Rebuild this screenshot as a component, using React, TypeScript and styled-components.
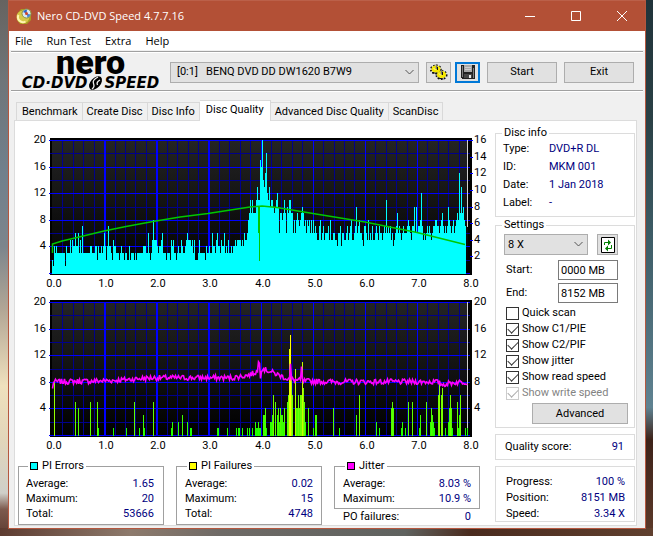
import React from "react";
import styled, { createGlobalStyle, css } from "styled-components";

const GlobalStyle = createGlobalStyle`
  * { box-sizing: border-box; }
  body { margin: 0; background: #5b5a58; color: #000; font: 11px/14px Roboto, "Liberation Sans", sans-serif; }
  button, input, select { font: inherit; color: inherit; margin: 0; }
`;

const Desktop = styled.div`
  min-height: 100vh;
  padding: 0 7px 7px 8px;
  background:
    linear-gradient(100deg, #5d3b30 0%, #8d7a6c 20%, #6e6a66 34%, #5f625f 62%, #4a2b1e 72%, #60402f 100%) bottom / 100% 8px no-repeat,
    linear-gradient(#666360 0%, #6f7579 15%, #71808c 32%, #7c858c 46%, #b3a796 58%, #efe0bd 72%, #e2d6ba 82%, #cfcfc9 92%, #7d5a4e 95%, #5d3b30 100%) left / 8px 100% no-repeat,
    linear-gradient(#20333a 0%, #2a4045 22%, #3d5c66 44%, #5f8291 76%, #3d2219 82%, #5d3a2a 100%) right / 7px 100% no-repeat;
`;

const Window = styled.main`
  border: 1px solid #b5573f;
  border-top: 0;
  background: #f0f0f0;
`;

const TitleBar = styled.header`
  height: 31px;
  display: flex;
  align-items: center;
  padding-left: 7px;
  background: #b35036;
  border-top: 1px solid #bb6049;
  color: #fff;
  font-family: "Open Sans", "Noto Sans", sans-serif;
`;

const Title = styled.h1`
  flex: 1;
  margin: 0 0 0 5px;
  font-size: 11px;
  font-weight: 400;
`;

const CaptionButton = styled.button`
  width: 46px;
  height: 30px;
  padding: 0;
  border: 0;
  background: none;
  display: grid;
  place-items: center;
`;

const MenuBar = styled.nav`
  height: 19px;
  display: flex;
  gap: 14px;
  padding-left: 6px;
  background: #fff;
  font-family: "Open Sans", "Noto Sans", sans-serif;
`;

const MenuItem = styled.button`
  border: 0;
  padding: 0;
  background: none;
  line-height: 18px;
`;

const Toolbar = styled.section`
  margin: 1px 2px 0;
  height: 40px;
  display: flex;
  align-items: center;
  padding: 2px 9px 0 7px;
  border-top: 1px solid #a0a0a0;
  border-bottom: 1px solid #a0a0a0;
  box-shadow: inset 0 1px #fff, 0 1px #fff;
`;

const Logo = styled.div`
  width: 145px;
  height: 36px;
  margin-right: 7px;
  display: flex;
  flex-direction: column;
  align-items: center;
`;

const LogoName = styled.span`
  font-size: 34px;
  line-height: 16px;
  font-weight: 900;
`;

const LogoProduct = styled.span`
  display: flex;
  align-items: center;
  font: italic bold 15px/14px "DejaVu Sans", sans-serif;
  margin-top: 6px;
`;

const SelectBox = styled.div<{ $grow?: boolean }>`
  position: relative;
  height: 21px;
  flex: ${(p) => (p.$grow ? "1" : "0 0 84px")};
  min-width: 0;
  select {
    appearance: none;
    width: 100%;
    height: 100%;
    padding: 0 22px 0 ${(p) => (p.$grow ? "6px" : "3px")};
    border: 1px solid #adadad;
    border-radius: 0;
    background: #e1e1e1;
    white-space: pre;
  }
  svg {
    position: absolute;
    right: 4px;
    top: 7px;
    pointer-events: none;
  }
`;

const Button = styled.button<{ $width: number; $focus?: boolean }>`
  width: ${(p) => p.$width}px;
  height: 21px;
  padding: 0;
  display: grid;
  place-items: center;
  border: ${(p) => (p.$focus ? "2px solid #0078d7" : "1px solid #adadad")};
  background: #e1e1e1;
`;

const Actions = styled.div`
  display: flex;
  margin-left: 7px;
  gap: 7px;
  & > :nth-child(2) { margin-left: -3px; }
`;

const Tabs = styled.div`
  display: flex;
  align-items: flex-end;
  height: 20px;
  margin: 9px 8px 0 5px;
  padding-left: 2px;
`;

const Tab = styled.button<{ $on?: boolean }>`
  height: 18px;
  padding: 0 4px;
  border: 1px solid #d9d9d9;
  border-bottom: 0;
  border-left-width: 0;
  background: #f0f0f0;
  white-space: nowrap;
  &:first-child { border-left-width: 1px; padding-left: 5px; }
  ${(p) => p.$on && css`
    height: 21px;
    margin-bottom: -1px;
    padding: 0 6px 2px;
    background: #fff;
    position: relative;
  `}
`;

const Panel = styled.section`
  display: grid;
  grid-template-columns: minmax(0, 1fr) 140px;
  margin: 0 8px 2px 5px;
  padding-right: 1px;
  border: 1px solid #dcdcdc;
  background: #fff;
`;

const Results = styled.div`
  padding-top: 8px;
`;

const Chart = styled.svg`
  display: block;
  width: 100%;
  height: auto;
  text { font: 11px Roboto, "Liberation Sans", sans-serif; }
`;

const Stats = styled.div`
  display: grid;
  grid-template-columns: repeat(3, 1fr);
  gap: 12px;
  margin-top: 6px;
  padding: 0 15px 0 3px;
`;

const Group = styled.fieldset<{ $dark?: boolean; $pad?: string }>`
  min-width: 0;
  margin: 0;
  padding: ${(p) => p.$pad ?? "0"};
  border: 1px solid ${(p) => (p.$dark ? "#a0a0a0" : "#dcdcdc")};
`;

const Legend = styled.legend<{ $inset?: boolean }>`
  margin-left: ${(p) => (p.$inset ? "2px" : "-1px")};
  padding: 0 2px;
  height: 14px;
  display: flex;
  align-items: center;
  gap: 4px;
`;

const Swatch = styled.i<{ $color: string }>`
  width: 8px;
  height: 8px;
  border: 1px solid #000;
  background: ${(p) => p.$color};
`;

const Row = styled.div<{ $h: number }>`
  display: flex;
  justify-content: space-between;
  line-height: ${(p) => p.$h}px;
`;

const InfoRow = styled.div`
  display: grid;
  grid-template-columns: 46px 1fr;
  line-height: 18px;
`;

const Value = styled.span`
  color: #000080;
`;

const PoRow = styled.div`
  display: flex;
  justify-content: space-between;
  padding: 0 9px;
  line-height: 16px;
`;

const Sidebar = styled.aside`
  padding-top: 5px;
  display: flex;
  flex-direction: column;
`;

const Settings = styled(Group)`
  margin-top: 1px;
  padding: 2px 6px 3px 7px;
`;

const SpeedRow = styled.div`
  display: flex;
  gap: 9px;
  margin: 0 0 5px 1px;
`;

const Fields = styled.div`
  display: grid;
  gap: 3px;
  margin: 0 10px 2px 3px;
`;

const Field = styled.label`
  display: grid;
  grid-template-columns: 1fr 60px;
  align-items: center;
  input {
    width: 60px;
    height: 20px;
    padding: 0 2px;
    border: 1px solid #7a7a7a;
  }
`;

const Check = styled.label`
  display: flex;
  align-items: center;
  gap: 3px;
  height: 16px;
  margin-left: 3px;
  white-space: nowrap;
  input {
    appearance: none;
    width: 13px;
    height: 13px;
    border: 1px solid #333;
    background: #fff;
    display: grid;
    place-items: center;
  }
  input:checked::after {
    content: "";
    width: 9px;
    height: 5px;
    margin-bottom: 3px;
    border: solid #333;
    border-width: 0 0 1px 1px;
    transform: rotate(-45deg);
  }
  input:disabled { border-color: #ccc; }
  input:disabled::after { border-color: #aaa; }
  &:has(input:disabled) { color: #838383; }
`;

const AdvancedRow = styled.div`
  display: flex;
  justify-content: flex-end;
  margin-top: 2px;
`;

const Box = styled.div`
  margin-top: 6px;
  padding: 5px 10px 5px 9px;
  border: 1px solid #dcdcdc;
`;

const ProgressBox = styled(Box)`
  padding: 7px 9px 0 10px;
  height: 56px;
`;

const Chevron = () => (
  <svg width="11" height="7" viewBox="0 0 11 7" fill="none" stroke="#555">
    <path d="M1.5 1 5.5 5 9.5 1" />
  </svg>
);

const DiscIcon = () => (
  <svg width="16" height="16" viewBox="0 0 16 16">
    <path d="M1 6 5 1h8l2 4v7l-4 4H4l-3-4Z" fill="#a89a22" />
    <circle cx="7" cy="9" r="6.5" fill="#d6c748" />
    <path d="M2.5 7a5 5 0 0 0 7 6.5" stroke="#fff6b0" strokeWidth="2" fill="none" />
    <circle cx="10.5" cy="5.5" r="4.5" fill="#dce7f2" stroke="#8a9440" />
    <path d="M10.5 5.5 7 4a4 4 0 0 1 4-2.5Z" fill="#3568c4" />
    <path d="m10.5 5.5 4 1a4 4 0 0 1-3 3Z" fill="#4a86d2" />
    <circle cx="10.5" cy="5.5" r="1.5" fill="#d0452c" />
  </svg>
);

const GearsIcon = () => (
  <svg width="18" height="18" viewBox="0 0 18 18">
    <g fill="none" stroke="#111" strokeWidth="2" strokeDasharray="1.5 1.5">
      <ellipse cx="6" cy="6.5" rx="5" ry="4" />
      <ellipse cx="11.5" cy="12" rx="5" ry="4" />
    </g>
    <g fill="#f5e800">
      <ellipse cx="6" cy="6" rx="4.5" ry="3.5" />
      <ellipse cx="11.5" cy="11.5" rx="4.5" ry="3.5" />
    </g>
    <path d="M6.5 1v5M11.5 6.5v5" stroke="#777" strokeWidth="1.5" />
    <path d="M2 9.5 7 10.500M7.500 15l6 1M7.5 4v3M12.5 9v3" stroke="#111" />
    <path d="m3.5 5 2 2M9 10.5l2 2" stroke="#fffbb0" />
  </svg>
);

const SaveIcon = () => (
  <svg width="14" height="14" viewBox="0 0 14 14" shapeRendering="crispEdges">
    <path d="M0 0h14v14H1l-1-1Z" fill="#222" />
    <path d="M1 1h1v11H1zM12 3h1v10h-1z" fill="#808080" />
    <path d="M3 0h8v7H3z" fill="#a9a9a9" />
    <path d="M4 2h6v1H4zM4 4h6v1H4z" fill="#cecece" />
    <path d="M3 9h8v4H3z" fill="#484848" />
    <path d="M8 10h2v3H8z" fill="#e8e8e8" />
  </svg>
);

const RefreshIcon = () => (
  <svg width="14" height="16" viewBox="0 0 14 16">
    <path d="M.5.5h13v15H.5z" fill="#fff" stroke="#000" />
    <path d="M3.5 8V5.5H7M10.5 8v3.5H7" fill="none" stroke="#008000" />
    <path d="m7 2.5 3 3-3 3ZM7 8.5l-3 3 3 3Z" fill="#008000" />
  </svg>
);

const LogoDisc = () => (
  <svg width="17" height="14" viewBox="0 0 17 14" overflow="visible">
    <ellipse cx="8.5" cy="7" rx="5" ry="8" transform="rotate(42 8.5 7)" />
    <path d="M11 1Q5 4 6.5 7.5T5 13M13 4Q9 6 10.5 9" stroke="#f0f0f0" strokeWidth="1.3" fill="none" />
  </svg>
);

/* Plot geometry shared by both charts. */
const LEFT = 37;
const TOP = 11;
const HEIGHT = 133;
const GB = 52.15;
const BASE = TOP + HEIGHT + 1;
const level = (v: number) => TOP + HEIGHT - (v * HEIGHT) / 20;

/* One base-36 digit per sampled column. */
const PI_ERRORS = [
  "21434333333331", "4333535446446353", "7333333344333442433434", "6424744325443332343323322423",
  "332323333334443363235855", "5434456333233325453323433", "5433456555453522235333332433",
  "43364435644354463435334344545555454655689",
  "b9b999bdbbhgkedficbdabba9abca69989b96a9bb99686898789a978687868", "6867",
  "6557856756", "6675855665", "5466746655", "6756785567", "a678665477", "6585657556", "7657665676",
  "b676756456", "7967656766", "67876577a6", "a6778c7565", "6767656778", "8776789767", "67a8767867", "898f9d9a87",
].join("");

const PI_FAILURES: [number, number][] = [
  [54, 8], [75, 5], [78, 4], [90, 5], [97, 5], [98, 1], [113, 1], [126, 1], [134, 5], [139, 1], [143, 3], [144, 1],
  [153, 5], [171, 1], [172, 2], [178, 2], [182, 3], [187, 2], [190, 1], [191, 1], [217, 1], [218, 1], [227, 1],
  [236, 1], [238, 1], [239, 1], [242, 1], [247, 1], [249, 1], [252, 1], [255, 2], [256, 1], [257, 1], [258, 2],
  [259, 1], [260, 1], [263, 3], [264, 3], [265, 4], [266, 1], [270, 2], [271, 2], [272, 3], [273, 6], [275, 5],
  [277, 3], [278, 4], [279, 2], [280, 4], [281, 3], [282, 3], [283, 2], [284, 4], [287, 5], [288, 6], [289, 13],
  [290, 15], [291, 9], [292, 6], [295, 10], [296, 4], [297, 4], [298, 6], [299, 4], [300, 6], [301, 6], [302, 11],
  [303, 7], [304, 5], [305, 2], [308, 4], [313, 1], [315, 3], [316, 3], [333, 4], [339, 1], [356, 3], [359, 6],
  [376, 2], [379, 1], [391, 4], [392, 5], [393, 4], [401, 1], [402, 2], [405, 1], [408, 5], [412, 5], [419, 1],
  [420, 3], [426, 5], [430, 2], [431, 4], [432, 3], [433, 2], [434, 1], [438, 6], [439, 8], [441, 6], [442, 7],
  [445, 1], [448, 2], [449, 4], [450, 6], [451, 4], [452, 1], [457, 5], [458, 1], [459, 3], [460, 6], [465, 1], [467, 1],
];

const JITTER_KEYS: [number, number][] = [
  [0, 8], [40, 8.1], [60, 8.2], [100, 8.6], [180, 8.6], [196, 9], [204, 9.5], [210, 10], [220, 9.4],
  [236, 8.4], [252, 8.1], [280, 8], [384, 8], [390, 7.6], [402, 7.9], [415, 8],
];

const jitterAt = (x: number) => {
  const i = JITTER_KEYS.findIndex(([k]) => k >= x);
  if (i <= 0) return JITTER_KEYS[0][1];
  const [x0, y0] = JITTER_KEYS[i - 1];
  const [x1, y1] = JITTER_KEYS[i];
  return y0 + ((y1 - y0) * (x - x0)) / (x1 - x0);
};

const JITTER_SPIKES: Record<number, number> = { 0: 7, 206: 11, 207: 10.8, 208: 8.5, 238: 10.7, 249: 10.3 };

const jitterPath = () => {
  let seed = 7;
  let d = "";
  for (let x = 0; x < 416; x++) {
    seed = (seed * 1103515245 + 12345) % 2147483648;
    const noise = (seed / 2147483648 - 0.5) * 0.8;
    const v = JITTER_SPIKES[x] ?? jitterAt(x) + noise;
    d += `${x ? "L" : "M"}${LEFT + x + 0.5} ${level(v).toFixed(1)}`;
  }
  return d;
};

function Grid({ id }: { id: string }) {
  const steps = Array.from({ length: 41 }, (_, i) => i);
  return (
    <g shapeRendering="crispEdges">
      <defs>
        <linearGradient id={id} x2="0" y2="1">
          <stop offset="0" stopColor="#242424" />
          <stop offset="1" stopColor="#000" />
        </linearGradient>
      </defs>
      <rect x={LEFT - 2} y={TOP - 2} width="422" height={HEIGHT + 4} fill="#000" />
      <rect x={LEFT} y={TOP} width="416" height={HEIGHT} fill={`url(#${id})`} />
      {steps.filter((i) => i % 5).map((i) => (
        <rect key={i} x={Math.round(LEFT + (i * GB) / 5)} y={TOP} width="1" height={HEIGHT} fill="#00008b" />
      ))}
      {[1, 3, 5, 7, 9].map((i) => (
        <rect key={i} x={LEFT - 2} y={Math.round(level(i * 2))} width="420" height="1" fill="#00008b" />
      ))}
      {[1, 2, 3, 4, 5, 6, 7].map((i) => (
        <rect key={i} x={Math.round(LEFT + i * GB)} y={TOP} width={i < 4 ? 2 : 1} height={HEIGHT} fill="#0000ff" />
      ))}
      {[0, 4, 8, 12, 16, 20].map((i) => (
        <rect key={i} x={LEFT - 3} y={Math.round(level(i))} width="421" height="1" fill="#0000ff" />
      ))}
    </g>
  );
}

function Axes({ right }: { right: [string, number][] }) {
  return (
    <g>
      {[4, 8, 12, 16, 20].map((v) => (
        <text key={v} x="31" y={Math.round(level(v)) + 3} textAnchor="end">{v}</text>
      ))}
      {right.map(([t, v]) => (
        <text key={t} x="459" y={Math.round(level(v)) + 3}>{t}</text>
      ))}
      {Array.from({ length: 9 }, (_, i) => (
        <text key={i} x={Math.round(LEFT + 2 + i * GB)} y="158" textAnchor="middle">{i}.0</text>
      ))}
    </g>
  );
}

function ErrorChart() {
  const bars = PI_ERRORS.slice(0, 416).split("").map((c, i) => {
    const y = Math.round(level(parseInt(c, 36)));
    return `M${LEFT + i} ${BASE}V${y}h1V${BASE}Z`;
  }).join("");
  return (
    <Chart viewBox="0 0 480 162" role="img" aria-label="PI Errors">
      <Grid id="errors" />
      <g shapeRendering="crispEdges">
        <path d={bars} fill="#00ffff" />
        <rect x="452" y={TOP} width="1" height="87" fill="#d0d0d0" />
        {[2, 4, 6, 8, 10, 12, 14, 16].map((v) => (
          <rect key={v} x="455" y={Math.round(level(v * 1.25))} width="3" height="1" fill="#0000ff" />
        ))}
      </g>
      <path
        d="M37.5 124V115L47 112 62 108.5 89 102 111 97.5 138 92.5 165 88 193 84.5 235 78 247 77 262 78.5 298 84.5 350 93 402 103.5 450 115.5"
        fill="none" stroke="#00c800" strokeWidth="1.5"
      />
      <path d="M243.5 78V104M244.5 78V132" stroke="#00c800" />
      <Axes right={[16, 14, 12, 10, 8, 6, 4, 2].map((v) => [String(v), v * 1.25])} />
    </Chart>
  );
}

function FailureChart() {
  return (
    <Chart viewBox="0 0 480 162" role="img" aria-label="PI Failures and jitter">
      <Grid id="failures" />
      <g shapeRendering="crispEdges">
        <rect x="452" y={TOP} width="1" height={HEIGHT} fill="#d0d0d0" />
        {PI_FAILURES.map(([x, v]) => (
          <rect
            key={x} x={x - 15} y={Math.round(level(v))} width="1"
            height={BASE - Math.round(level(v))} fill={`rgb(${Math.min(255, 10 + v * 17)},255,0)`}
          />
        ))}
      </g>
      <path d={jitterPath()} fill="none" stroke="#ff00ff" strokeWidth="1.6" />
      <Axes right={[20, 16, 12, 8, 4].map((v) => [String(v), v])} />
    </Chart>
  );
}

function StatGroup({ title, color, rows, pad }: { title: string; color: string; rows: [string, string][]; pad: string }) {
  return (
    <Group $dark $pad={pad}>
      <Legend $inset><Swatch $color={color} />{title}</Legend>
      {rows.map(([k, v]) => (
        <Row $h={15} key={k}><span>{k}</span><Value>{v}</Value></Row>
      ))}
    </Group>
  );
}

const TABS = ["Benchmark", "Create Disc", "Disc Info", "Disc Quality", "Advanced Disc Quality", "ScanDisc"];
const INFO = [["Type:", "DVD+R DL"], ["ID:", "MKM 001"], ["Date:", "1 Jan 2018"], ["Label:", "-"]];
const CHECKS: [string, boolean, boolean][] = [
  ["Quick scan", false, false], ["Show C1/PIE", true, false], ["Show C2/PIF", true, false],
  ["Show jitter", true, false], ["Show read speed", true, false], ["Show write speed", true, true],
];

export default function App() {
  return (
    <Desktop>
      <GlobalStyle />
      <Window>
        <TitleBar>
          <DiscIcon />
          <Title>Nero CD-DVD Speed 4.7.7.16</Title>
          <CaptionButton aria-label="Minimize">
            <svg width="10" height="10"><path d="M0 5.5h10" stroke="#fff" /></svg>
          </CaptionButton>
          <CaptionButton aria-label="Maximize">
            <svg width="10" height="10"><path d="M.5.5h9v9h-9z" stroke="#fff" fill="none" /></svg>
          </CaptionButton>
          <CaptionButton aria-label="Close">
            <svg width="10" height="10"><path d="m0 0 10 10M10 0 0 10" stroke="#fff" /></svg>
          </CaptionButton>
        </TitleBar>
        <MenuBar>
          {["File", "Run Test", "Extra", "Help"].map((m) => <MenuItem key={m}>{m}</MenuItem>)}
        </MenuBar>
        <Toolbar>
          <Logo>
            <LogoName>nero</LogoName>
            <LogoProduct>CD·DVD<LogoDisc />SPEED</LogoProduct>
          </Logo>
          <SelectBox $grow>
            <select aria-label="Drive"><option>{"[0:1]\u00a0\u00a0\u00a0BENQ DVD DD DW1620 B7W9"}</option></select>
            <Chevron />
          </SelectBox>
          <Actions>
            <Button $width={25} aria-label="Options"><GearsIcon /></Button>
            <Button $width={25} $focus aria-label="Save"><SaveIcon /></Button>
            <Button $width={70}>Start</Button>
            <Button $width={70}>Exit</Button>
          </Actions>
        </Toolbar>
        <Tabs role="tablist">
          {TABS.map((t) => (
            <Tab key={t} role="tab" $on={t === "Disc Quality"} aria-selected={t === "Disc Quality"}>{t}</Tab>
          ))}
        </Tabs>
        <Panel>
          <Results>
            <ErrorChart />
            <FailureChart />
            <Stats>
              <StatGroup title="PI Errors" color="#00ffff" pad="3px 9px 1px 7px"
                rows={[["Average:", "1.65"], ["Maximum:", "20"], ["Total:", "53666"]]} />
              <StatGroup title="PI Failures" color="#ffff00" pad="3px 8px 1px 8px"
                rows={[["Average:", "0.02"], ["Maximum:", "15"], ["Total:", "4748"]]} />
              <div>
                <StatGroup title="Jitter" color="#ff00ff" pad="3px 8px 2px 8px"
                  rows={[["Average:", "8.03 %"], ["Maximum:", "10.9 %"]]} />
                <PoRow><span>PO failures:</span><Value>0</Value></PoRow>
              </div>
            </Stats>
          </Results>
          <Sidebar>
            <Group $pad="0 7px 4px">
              <Legend>Disc info</Legend>
              {INFO.map(([k, v]) => <InfoRow key={k}><span>{k}</span><Value>{v}</Value></InfoRow>)}
            </Group>
            <Settings>
              <Legend>Settings</Legend>
              <SpeedRow>
                <SelectBox>
                  <select aria-label="Speed"><option>8 X</option></select>
                  <Chevron />
                </SelectBox>
                <Button $width={21} aria-label="Refresh"><RefreshIcon /></Button>
              </SpeedRow>
              <Fields>
                <Field>Start:<input defaultValue="0000 MB" /></Field>
                <Field>End:<input defaultValue="8152 MB" /></Field>
              </Fields>
              {CHECKS.map(([t, on, off]) => (
                <Check key={t}><input type="checkbox" defaultChecked={on} disabled={off} />{t}</Check>
              ))}
              <AdvancedRow><Button $width={96}>Advanced</Button></AdvancedRow>
            </Settings>
            <Box><Row $h={14}><span>Quality score:</span><Value>91</Value></Row></Box>
            <ProgressBox>
              <Row $h={16}><span>Progress:</span><Value>100 %</Value></Row>
              <Row $h={16}><span>Position:</span><Value>8151 MB</Value></Row>
              <Row $h={16}><span>Speed:</span><Value>3.34 X</Value></Row>
            </ProgressBox>
          </Sidebar>
        </Panel>
      </Window>
    </Desktop>
  );
}
